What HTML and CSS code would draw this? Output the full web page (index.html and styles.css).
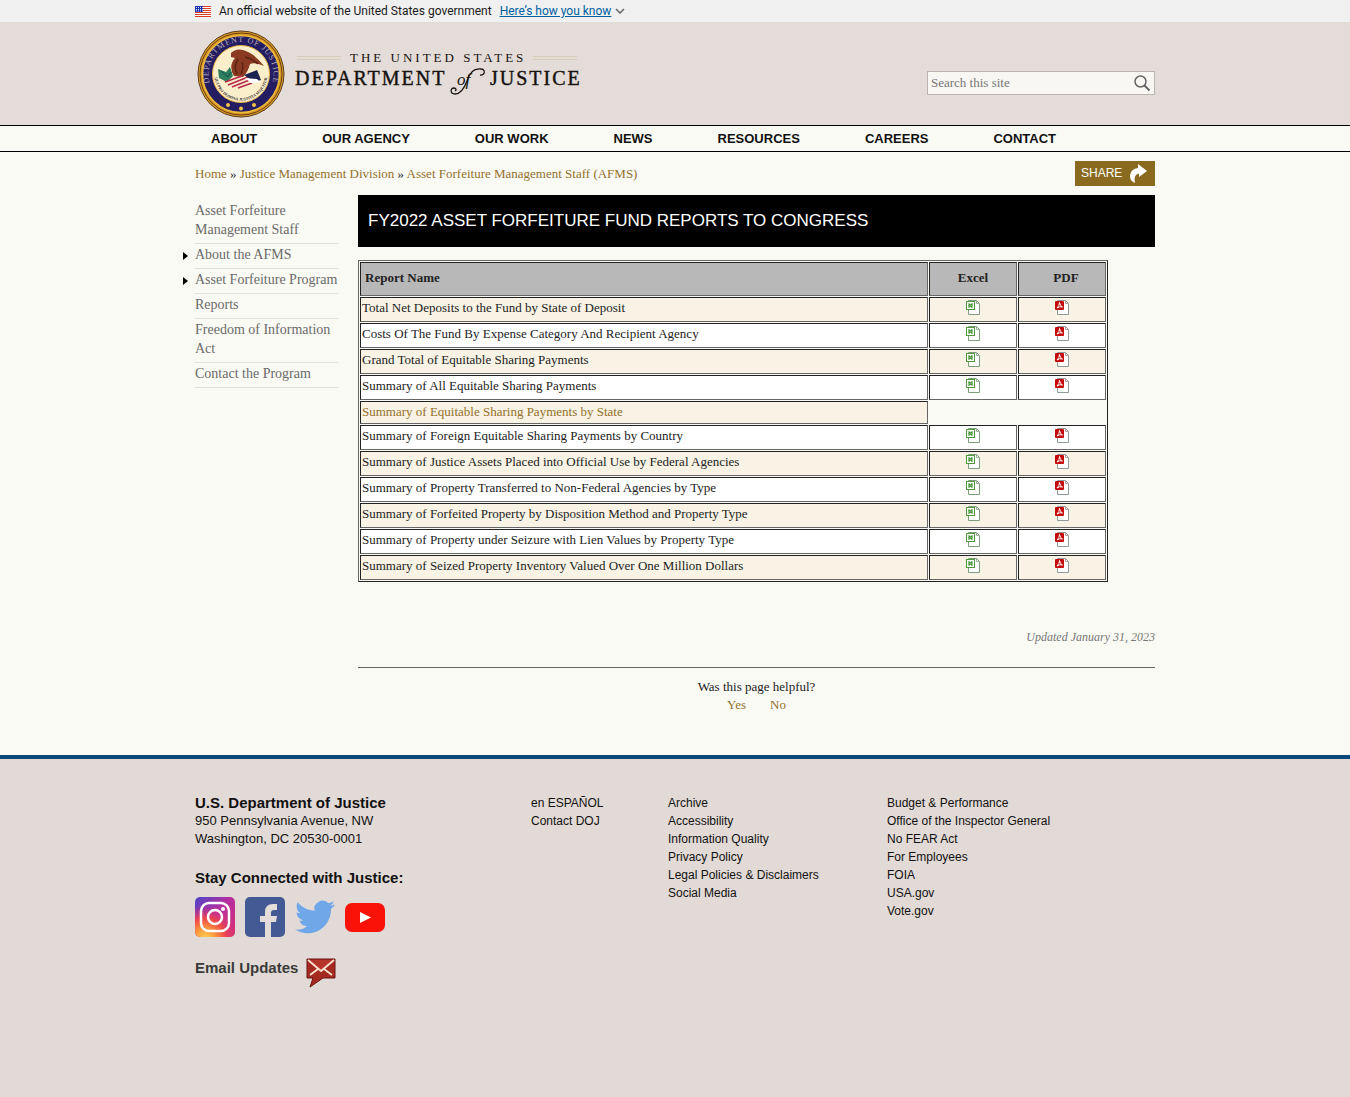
FILE: index.html
```html
<!DOCTYPE html>
<html lang="en">
<head>
<meta charset="utf-8">
<title>FY2022 Asset Forfeiture Fund Reports to Congress</title>
<link rel="stylesheet" href="styles.css">
</head>
<body>
<svg class="sprite" width="0" height="0" aria-hidden="true">
  <symbol id="excel" viewBox="0 0 16 16">
    <path d="M3.500 1.500h8l3 3v11h-11z" fill="#fff" stroke="#7f9c7f"/>
    <path d="M11.500 1.500v3h3" fill="none" stroke="#9ab09a"/>
    <rect x="1.500" y="2.500" width="8" height="8" fill="#fff" stroke="#4f9b3c"/>
    <path d="M3.500 4.500l4 4M7.500 4.500l-4 4" stroke="#3c8a2c" stroke-width="1.500"/>
    <path d="M3 6.500h5" stroke="#7ab56c"/>
  </symbol>
  <symbol id="pdf" viewBox="0 0 16 16">
    <path d="M3.500 1.500h8l3 3v11h-11z" fill="#fff" stroke="#8f9a9a"/>
    <path d="M11.500 1.500v3h3" fill="none" stroke="#c0a0a0"/>
    <rect x="1" y="2" width="9" height="9" rx="1" fill="#c40a0a"/>
    <path d="M3 9q2.500-2 2.500-5.500Q6 7 8.500 8Q5.500 7 3 9" fill="none" stroke="#fff" stroke-width="1"/>
  </symbol>
</svg>

<div class="banner">
  <div class="wrap banner-row">
    <svg class="flag" viewBox="0 0 16 11" aria-hidden="true">
      <rect width="16" height="11" fill="#fff"/>
      <path d="M0 .5h16M0 2.500h16M0 4.500h16M0 6.500h16M0 8.500h16M0 10.500h16" stroke="#db3e1f"/>
      <rect width="8" height="6" fill="#1e33b1"/>
      <path d="M1 1.500h7M1 3.500h7M1 5h7" stroke="#fff" stroke-width=".8" stroke-dasharray="1 1"/>
    </svg>
    <span>An official website of the United States government</span>
    <a class="know" href="#know">Here’s how you know</a>
    <svg class="chev" viewBox="0 0 10 6" aria-hidden="true"><path d="M1 1l4 4 4-4" fill="none" stroke="#666" stroke-width="1.500"/></svg>
  </div>
</div>

<header class="masthead">
  <div class="wrap masthead-row">
    <a class="brand" href="#home" aria-label="The United States Department of Justice">
      <svg class="seal" viewBox="0 0 92 92" aria-hidden="true">
        <defs>
          <path id="arc-top" d="M16 59A32.500 32.500 0 1 1 76 59"/>
          <path id="arc-low" d="M20 41A26.500 26.500 0 1 0 72 41"/>
        </defs>
        <circle cx="46" cy="46" r="43" fill="#d99a24" stroke="#5b3a1c"/>
        <circle cx="46" cy="46" r="41" fill="none" stroke="#6a3f16" stroke-width="1"/>
        <circle cx="46" cy="46" r="38.500" fill="#241d62" stroke="#efb93a" stroke-width="1.500"/>
        <circle cx="46" cy="46" r="28.500" fill="#fbeecb" stroke="#e5b23f"/>
        <text class="seal-text"><textPath href="#arc-top" startOffset="50%" text-anchor="middle">DEPARTMENT OF JUSTICE</textPath></text>
        <text class="seal-motto"><textPath href="#arc-low" startOffset="50%" text-anchor="middle">QUI PRO DOMINA JUSTITIA SEQUITUR</textPath></text>
        <path d="M36 25q5-5 12-3 11 3 21 16-9-4-14-2-2 8-7 13l-9-1q-6-10 1-18l-4-1z" fill="#8a3a20"/>
        <path d="M43 31q-5 7-1 15M50 29q8 2 13 7M47 34q2 6-1 12" fill="none" stroke="#5c2414" stroke-width="1.500"/>
        <path d="M23 41l8 3 4-5 3 9-6 6-8-4z" fill="#2e7d5c"/>
        <path d="M26 43l7 6 3-5" fill="none" stroke="#174f55"/>
        <path d="M30 54l17-6M33 57l20-8M37 59l20-8M43 60l14-5" stroke="#b62c4f" stroke-width="1.800"/>
        <path d="M49 47l13-5 4 10-7 2z" fill="#1b2350"/>
        <path d="M50 50l12 1 3 3-9 1z" fill="#fff"/>
        <g fill="#f1c54a"><circle cx="33" cy="77" r="2"/><circle cx="46" cy="80.500" r="2"/><circle cx="59" cy="77" r="2"/></g>
      </svg>
      <svg class="wordmark" viewBox="0 0 290 60" aria-hidden="true">
        <path d="M3 16.500h44M3 19.500h44M239 16.500h44M239 19.500h44" stroke="#d9cdb8"/>
        <text class="wm-small" x="56" y="22">THE UNITED STATES</text>
        <text class="wm-large" x="1" y="45">DEPARTMENT</text>
        <text class="wm-of" x="163" y="45">of</text>
        <text class="wm-large" x="196" y="45">JUSTICE</text>
        <path d="M186 35c5 1 6-6 1-6-8-1-12 5-14 12-3 8-7 13-12 13-5 0-5-6-1-6 2 0 3 2 1 3" fill="none" stroke="#15120f" stroke-width="1.300"/>
      </svg>
    </a>
    <form class="search" role="search">
      <input type="text" placeholder="Search this site" aria-label="Search this site">
      <button type="submit" aria-label="Search">
        <svg viewBox="0 0 18 18" width="18" height="18" aria-hidden="true"><circle cx="7.500" cy="7.500" r="5.500" fill="none" stroke="#666" stroke-width="1.500"/><path d="M11.500 11.500l5 5" stroke="#666" stroke-width="2"/></svg>
      </button>
    </form>
  </div>
</header>

<nav class="nav" aria-label="Main">
  <div class="wrap nav-row">
    <a href="#about">ABOUT</a>
    <a href="#agency">OUR AGENCY</a>
    <a href="#work">OUR WORK</a>
    <a href="#news">NEWS</a>
    <a href="#resources">RESOURCES</a>
    <a href="#careers">CAREERS</a>
    <a href="#contact">CONTACT</a>
  </div>
</nav>

<div class="wrap page">
  <div class="crumb-row">
    <div class="crumbs"><a href="#home">Home</a> » <a href="#jmd">Justice Management Division</a> » <a href="#afms">Asset Forfeiture Management Staff (AFMS)</a></div>
    <button class="share" type="button">SHARE
      <svg viewBox="0 0 18 20" width="18" height="20" aria-hidden="true"><path d="M9 0l9 7-8 6V9.500q-6 1-4 9.500Q0 16 1 11q1-6 8-7z" fill="#fff"/></svg>
    </button>
  </div>

  <div class="columns">
    <nav class="side" aria-label="Section">
      <ul>
        <li><a href="#s1">Asset Forfeiture Management Staff</a></li>
        <li class="has-children"><a href="#s2">About the AFMS</a></li>
        <li class="has-children"><a href="#s3">Asset Forfeiture Program</a></li>
        <li><a href="#s4">Reports</a></li>
        <li><a href="#s5">Freedom of Information Act</a></li>
        <li><a href="#s6">Contact the Program</a></li>
      </ul>
    </nav>

    <main class="content">
      <h1>FY2022 ASSET FORFEITURE FUND REPORTS TO CONGRESS</h1>
      <table class="reports">
        <thead>
          <tr><th class="name" scope="col">Report Name</th><th class="file" scope="col">Excel</th><th class="file" scope="col">PDF</th></tr>
        </thead>
        <tbody>
          <tr><td>Total Net Deposits to the Fund by State of Deposit</td><td><a href="#x" aria-label="Excel"><svg><use href="#excel"/></svg></a></td><td><a href="#p" aria-label="PDF"><svg><use href="#pdf"/></svg></a></td></tr>
          <tr><td>Costs Of The Fund By Expense Category And Recipient Agency</td><td><a href="#x" aria-label="Excel"><svg><use href="#excel"/></svg></a></td><td><a href="#p" aria-label="PDF"><svg><use href="#pdf"/></svg></a></td></tr>
          <tr><td>Grand Total of Equitable Sharing Payments</td><td><a href="#x" aria-label="Excel"><svg><use href="#excel"/></svg></a></td><td><a href="#p" aria-label="PDF"><svg><use href="#pdf"/></svg></a></td></tr>
          <tr><td>Summary of All Equitable Sharing Payments</td><td><a href="#x" aria-label="Excel"><svg><use href="#excel"/></svg></a></td><td><a href="#p" aria-label="PDF"><svg><use href="#pdf"/></svg></a></td></tr>
          <tr class="single"><td><a href="#state">Summary of Equitable Sharing Payments by State</a></td></tr>
          <tr><td>Summary of Foreign Equitable Sharing Payments by Country</td><td><a href="#x" aria-label="Excel"><svg><use href="#excel"/></svg></a></td><td><a href="#p" aria-label="PDF"><svg><use href="#pdf"/></svg></a></td></tr>
          <tr><td>Summary of Justice Assets Placed into Official Use by Federal Agencies</td><td><a href="#x" aria-label="Excel"><svg><use href="#excel"/></svg></a></td><td><a href="#p" aria-label="PDF"><svg><use href="#pdf"/></svg></a></td></tr>
          <tr><td>Summary of Property Transferred to Non-Federal Agencies by Type</td><td><a href="#x" aria-label="Excel"><svg><use href="#excel"/></svg></a></td><td><a href="#p" aria-label="PDF"><svg><use href="#pdf"/></svg></a></td></tr>
          <tr><td>Summary of Forfeited Property by Disposition Method and Property Type</td><td><a href="#x" aria-label="Excel"><svg><use href="#excel"/></svg></a></td><td><a href="#p" aria-label="PDF"><svg><use href="#pdf"/></svg></a></td></tr>
          <tr><td>Summary of Property under Seizure with Lien Values by Property Type</td><td><a href="#x" aria-label="Excel"><svg><use href="#excel"/></svg></a></td><td><a href="#p" aria-label="PDF"><svg><use href="#pdf"/></svg></a></td></tr>
          <tr><td>Summary of Seized Property Inventory Valued Over One Million Dollars</td><td><a href="#x" aria-label="Excel"><svg><use href="#excel"/></svg></a></td><td><a href="#p" aria-label="PDF"><svg><use href="#pdf"/></svg></a></td></tr>
        </tbody>
      </table>
      <p class="updated">Updated January 31, 2023</p>
      <div class="helpful">
        <p>Was this page helpful?</p>
        <p class="answers"><a href="#yes">Yes</a><a href="#no">No</a></p>
      </div>
    </main>
  </div>
</div>

<footer class="footer">
  <div class="wrap footer-row">
    <div class="contact">
      <h2>U.S. Department of Justice</h2>
      <p>950 Pennsylvania Avenue, NW</p>
      <p>Washington, DC 20530-0001</p>
      <h2 class="stay">Stay Connected with Justice:</h2>
      <div class="social">
        <a href="#instagram" aria-label="Instagram">
          <svg viewBox="0 0 40 40">
            <defs>
              <linearGradient id="ig-a" x1="0" y1="0" x2="1" y2="1"><stop offset="0" stop-color="#4a45c8"/><stop offset=".45" stop-color="#b52fa0"/><stop offset="1" stop-color="#d92e6e"/></linearGradient>
              <radialGradient id="ig-b" cx=".25" cy="1.050" r=".85"><stop offset="0" stop-color="#ffd75a"/><stop offset=".3" stop-color="#fb9a3c"/><stop offset=".6" stop-color="#f0494a"/><stop offset="1" stop-color="#d02f88" stop-opacity="0"/></radialGradient>
            </defs>
            <rect width="40" height="40" rx="5" fill="url(#ig-a)"/><rect width="40" height="40" rx="5" fill="url(#ig-b)"/>
            <g fill="none" stroke="#fff" stroke-width="2.500"><rect x="6" y="6" width="28" height="28" rx="8"/><circle cx="20" cy="20" r="7"/></g><circle cx="28" cy="12" r="2" fill="#fff"/>
          </svg>
        </a>
        <a href="#facebook" aria-label="Facebook">
          <svg viewBox="0 0 40 40"><rect width="40" height="40" rx="5" fill="#435a94"/><path d="M20 40V25h-5v-6h5v-4q0-8 8-8h4v6h-3q-3 0-3 3v3h6l-1 6h-5v15z" fill="#e4dcd9"/></svg>
        </a>
        <a href="#twitter" aria-label="Twitter">
          <svg viewBox="0 0 24 24"><path d="M23.953 4.570a10 10 0 01-2.825.775 4.958 4.958 0 002.163-2.723c-.951.555-2.005.959-3.127 1.184a4.920 4.920 0 00-8.384 4.482C7.690 8.095 4.067 6.130 1.640 3.162a4.822 4.822 0 00-.666 2.475c0 1.710.870 3.213 2.188 4.096a4.904 4.904 0 01-2.228-.616v.060a4.923 4.923 0 003.946 4.827 4.996 4.996 0 01-2.212.085 4.936 4.936 0 004.604 3.417 9.867 9.867 0 01-6.102 2.105c-.390 0-.779-.023-1.170-.067a13.995 13.995 0 007.557 2.209c9.053 0 13.998-7.496 13.998-13.985 0-.210 0-.420-.015-.630A9.935 9.935 0 0024 4.590z" fill="#70a7e8"/></svg>
        </a>
        <a href="#youtube" aria-label="YouTube">
          <svg viewBox="0 0 40 40"><rect y="6" width="40" height="29" rx="7" fill="#fa1208"/><path d="M15 15l11 5.500-11 5.500z" fill="#fff"/></svg>
        </a>
      </div>
      <a class="email" href="#email">Email Updates
        <svg viewBox="0 0 30 30" aria-hidden="true"><path d="M1 1h28v19H17L4 29l3-9H1z" fill="#a52a22" stroke="#6e1512"/><path d="M2 2h26L15 13z" fill="#b5352a"/><path d="M2 2l13 11L28 2M4 17l8-6M26 17l-8-6" fill="none" stroke="#fbe3d0" stroke-width="1.800"/></svg>
      </a>
    </div>
    <ul class="links-a">
      <li><a href="#es">en ESPAÑOL</a></li>
      <li><a href="#doj">Contact DOJ</a></li>
    </ul>
    <ul class="links-b">
      <li><a href="#f1">Archive</a></li>
      <li><a href="#f2">Accessibility</a></li>
      <li><a href="#f3">Information Quality</a></li>
      <li><a href="#f4">Privacy Policy</a></li>
      <li><a href="#f5">Legal Policies &amp; Disclaimers</a></li>
      <li><a href="#f6">Social Media</a></li>
    </ul>
    <ul>
      <li><a href="#f7">Budget &amp; Performance</a></li>
      <li><a href="#f8">Office of the Inspector General</a></li>
      <li><a href="#f9">No FEAR Act</a></li>
      <li><a href="#f10">For Employees</a></li>
      <li><a href="#f11">FOIA</a></li>
      <li><a href="#f12">USA.gov</a></li>
      <li><a href="#f13">Vote.gov</a></li>
    </ul>
  </div>
</footer>
</body>
</html>
```
FILE: styles.css
```css
* { box-sizing: border-box; }
body {
  margin: 0;
  min-height: 100vh;
  display: flex;
  flex-direction: column;
  background: #fafaf5;
  color: #222;
  font: 13px/18px "Liberation Serif", serif;
}
p, h1, h2, ul { margin: 0; padding: 0; }
ul { list-style: none; }
a { color: #94712b; text-decoration: none; }
button { font: inherit; cursor: pointer; }
.sprite { position: absolute; }
.wrap { width: 100%; max-width: 960px; margin: 0 auto; }

.banner { background: #f0f0f0; color: #1b1b1b; }
.banner-row {
  display: flex;
  align-items: center;
  height: 22px;
  font: 12px/22px Roboto, sans-serif;
}
.flag { width: 16px; height: 11px; margin-right: 8px; }
.know { margin: 0 4px 0 8px; color: #005ea2; text-decoration: underline; }
.chev { width: 10px; height: 6px; }

.masthead { background: #e4dcd9; }
.masthead-row { display: flex; justify-content: space-between; height: 103px; padding-top: 6px; }
.brand { display: flex; color: #15120f; }
.seal { width: 92px; height: 92px; }
.wordmark { width: 290px; height: 60px; margin: 12px 0 0 7px; }
.seal-text { font: 8px "Liberation Serif", serif; fill: #b9b0b4; letter-spacing: 1px; }
.seal-motto { font: bold 4px "Liberation Serif", serif; fill: #3a3030; }
.wm-small { font: 13px "Liberation Serif", serif; letter-spacing: 3px; fill: #15120f; }
.wm-large { font: 20px "Liberation Serif", serif; letter-spacing: 2px; fill: #15120f; stroke: #15120f; stroke-width: .4px; }
.wm-of { font: italic 17px "Liberation Serif", serif; fill: #15120f; }
.search {
  display: flex;
  align-items: center;
  width: 228px;
  height: 24px;
  margin-top: 43px;
  border: 1px solid #b8b4b0;
  background: #f9f7f4;
}
.search input {
  flex: 1;
  min-width: 0;
  padding: 0 3px;
  border: 0;
  background: none;
  font: 13px/20px "Liberation Serif", serif;
}
.search input::placeholder { color: #777; }
.search button { display: flex; padding: 0 3px 0 0; border: 0; background: none; }

.nav { border: solid #000; border-width: 1px 0; }
.nav-row {
  display: flex;
  gap: 65px;
  padding: 0 16px;
  font: bold 13px/25px "Liberation Sans", sans-serif;
}
.nav a { color: #111; }

.crumb-row { display: flex; justify-content: space-between; align-items: center; padding: 9px 0; }
.share {
  display: flex;
  align-items: center;
  justify-content: space-between;
  width: 80px;
  height: 25px;
  padding: 0 8px 0 6px;
  border: 0;
  background: #8a6a1f;
  color: #fff;
  font: 12px/25px "Liberation Sans", sans-serif;
}
.columns { display: flex; gap: 20px; }
.side { width: 143px; padding-top: 5px; font-size: 14px; line-height: 19px; }
.side li { display: flex; align-items: center; }
.side a { flex: 1; padding: 1px 0 4px; border-bottom: 1px solid #e0e0da; color: #6a6a6a; }
.has-children { margin-left: -12px; }
.has-children::before {
  content: "";
  margin: 0 7px 2px 0;
  border: solid transparent;
  border-width: 4px 0 4px 5px;
  border-left-color: #000;
}
.has-children a { white-space: nowrap; }
.content { flex: 1; min-width: 0; }
h1 {
  padding: 0 10px;
  background: #000;
  color: #fff;
  font: 17px/52px "Liberation Sans", sans-serif;
}
.reports {
  width: 750px;
  max-width: 100%;
  margin: 13px 0 46px;
  border: 1px solid;
  border-color: #666 #222 #222 #666;
  border-spacing: 1px;
}
.reports th, .reports td { padding: 1px; border: 1px solid; border-color: #222 #666 #666 #222; }
.reports th { height: 34px; padding: 0 4px 2px; background: #b8b8b8; }
.reports .name { text-align: left; }
.reports .file { width: 88px; }
.reports .file:last-child { padding-left: 12px; }
.reports td { height: 25px; background: #fff; text-align: center; vertical-align: top; }
.reports td:first-child { text-align: left; }
.reports .single td { height: 23px; }
.reports tr:nth-child(odd) td { background: #f8f3e4; }
.reports td svg { display: block; width: 16px; height: 16px; margin: 0 auto; }
.updated { color: #777; font-size: 12px; font-style: italic; text-align: right; }
.helpful { margin-top: 21px; padding: 10px 0 41px; border-top: 1px solid #666; text-align: center; }
.answers { display: flex; justify-content: center; gap: 24px; }

.footer {
  flex: 1;
  border-top: 4px solid #0b4a78;
  background: #e2dad6;
  color: #111;
  font: 12px/18px "Liberation Sans", sans-serif;
}
.footer-row { display: flex; padding-top: 35px; }
.footer a { color: #111; }
.contact { width: 336px; font-size: 13px; }
.footer h2 { font-size: 15px; line-height: 18px; }
.footer .stay { margin-top: 21px; }
.links-a { width: 137px; }
.links-b { width: 219px; }
.social { display: flex; gap: 10px; padding: 10px 0 21px; }
.social svg { display: block; width: 40px; height: 40px; }
.footer .email { display: flex; gap: 8px; color: #3a3a3a; font-size: 15px; font-weight: bold; line-height: 20px; }
.email svg { width: 30px; height: 30px; }
```
